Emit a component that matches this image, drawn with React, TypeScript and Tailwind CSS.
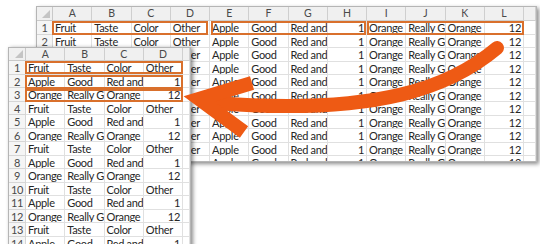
const font = "font-['Lato','Liberation_Sans',sans-serif]";

const backRow = [
  "Fruit",
  "Taste",
  "Color",
  "Other",
  "Apple",
  "Good",
  "Red and Delicious",
  "1",
  "Orange",
  "Really Good",
  "Orange",
  "12",
  "",
];

const frontRows = [
  ["Fruit", "Taste", "Color", "Other", ""],
  ["Apple", "Good", "Red and Delicious", "1", ""],
  ["Orange", "Really Good", "Orange", "12", ""],
];

const isNum = (v: string) => /^\d+$/.test(v);

const Corner = () => (
  <div className="flex items-end justify-end border-r border-b border-[#c9c9c9] bg-[#f0f0f0] p-[2px]">
    <svg width="8" height="8" viewBox="0 0 8 8">
      <polygon points="8,0 8,8 0,8" fill="#c4c4c4" />
    </svg>
  </div>
);

interface SheetProps {
  letters: string[];
  rows: string[][];
  cols: string;
  headH: string;
}

const Sheet = ({ letters, rows, cols, headH }: SheetProps) => (
  <div className={`grid ${cols} auto-rows-[13.5px] text-[11px] tracking-[-0.3px] text-[#262626] ${font}`}>
    <Corner />
    {letters.map((l, i) => (
      <div
        key={l + i}
        className={`${headH} border-r border-b border-[#cfcfcf] bg-[#f0f0f0] text-center text-[10.5px] leading-[13px] text-[#4a4a4a]`}
      >
        {l}
      </div>
    ))}
    {rows.map((row, r) => (
      <div key={r} className="contents">
        <div className="border-r border-b border-[#d6d6d6] bg-[#f5f5f5] text-center leading-[13.5px] text-[#4a4a4a]">
          {r + 1}
        </div>
        {row.map((v, c) => (
          <div
            key={c}
            className={`overflow-hidden whitespace-nowrap border-r border-b border-[#e0e0e0] px-[2px] leading-[13.5px] ${
              isNum(v) ? "text-right" : "text-left"
            }`}
          >
            {v}
          </div>
        ))}
      </div>
    ))}
  </div>
);

const Box = ({ x, y, w }: { x: number; y: number; w: number }) => (
  <div
    className="absolute h-[13.5px] border-2 border-[#d9702c]"
    style={{ left: x, top: y, width: w }}
  />
);

export default function App() {
  const front = Array.from({ length: 14 }, (_, i) => frontRows[i % 3]);
  const back = Array.from({ length: 11 }, () => backRow);

  return (
    <div className="relative h-[244px] w-[540px] overflow-hidden bg-white">
      {/* back sheet */}
      <div className="ml-[36px] mt-[6px] h-[156px] w-[501px] overflow-hidden border border-[#b5b5b5] bg-white shadow-[2px_2px_4px_rgba(0,0,0,0.45)]">
        <div className="relative">
          <Sheet
            letters={["A", "B", "C", "D", "E", "F", "G", "H", "I", "J", "K", "L", ""]}
            rows={back}
            cols="grid-cols-[16px_repeat(12,39.25px)_1fr] grid-rows-[14px]"
            headH="h-[14px]"
          />
          <Box x={15} y={14} w={156} />
          <Box x={174} y={14} w={155} />
          <Box x={330} y={14} w={157} />
        </div>
      </div>

      {/* front sheet */}
      <div className="absolute left-[8px] top-[47px] h-[210px] w-[183px] overflow-hidden border border-[#b5b5b5] bg-white shadow-[2px_1px_4px_rgba(0,0,0,0.45)]">
        <div className="relative">
          <Sheet
            letters={["A", "B", "C", "D", ""]}
            rows={front}
            cols="grid-cols-[17px_repeat(4,39.25px)_1fr] grid-rows-[13px]"
            headH="h-[13px]"
          />
          <Box x={16} y={12.5} w={158} />
          <Box x={16} y={27} w={158} />
          <Box x={16} y={40.5} w={158} />
        </div>
      </div>

      {/* arrow */}
      <svg className="pointer-events-none absolute left-0 top-0" width="540" height="244" viewBox="0 0 540 244">
        <path
          d="M497 48 C 452 86, 380 116, 214 103"
          fill="none"
          stroke="#ee5a14"
          strokeWidth="14"
          strokeLinecap="round"
        />
        <path
          d="M252 83 L 199 99 L 244 132"
          fill="none"
          stroke="#ee5a14"
          strokeWidth="14"
          strokeLinejoin="miter"
          strokeMiterlimit="6"
        />
      </svg>
    </div>
  );
}
